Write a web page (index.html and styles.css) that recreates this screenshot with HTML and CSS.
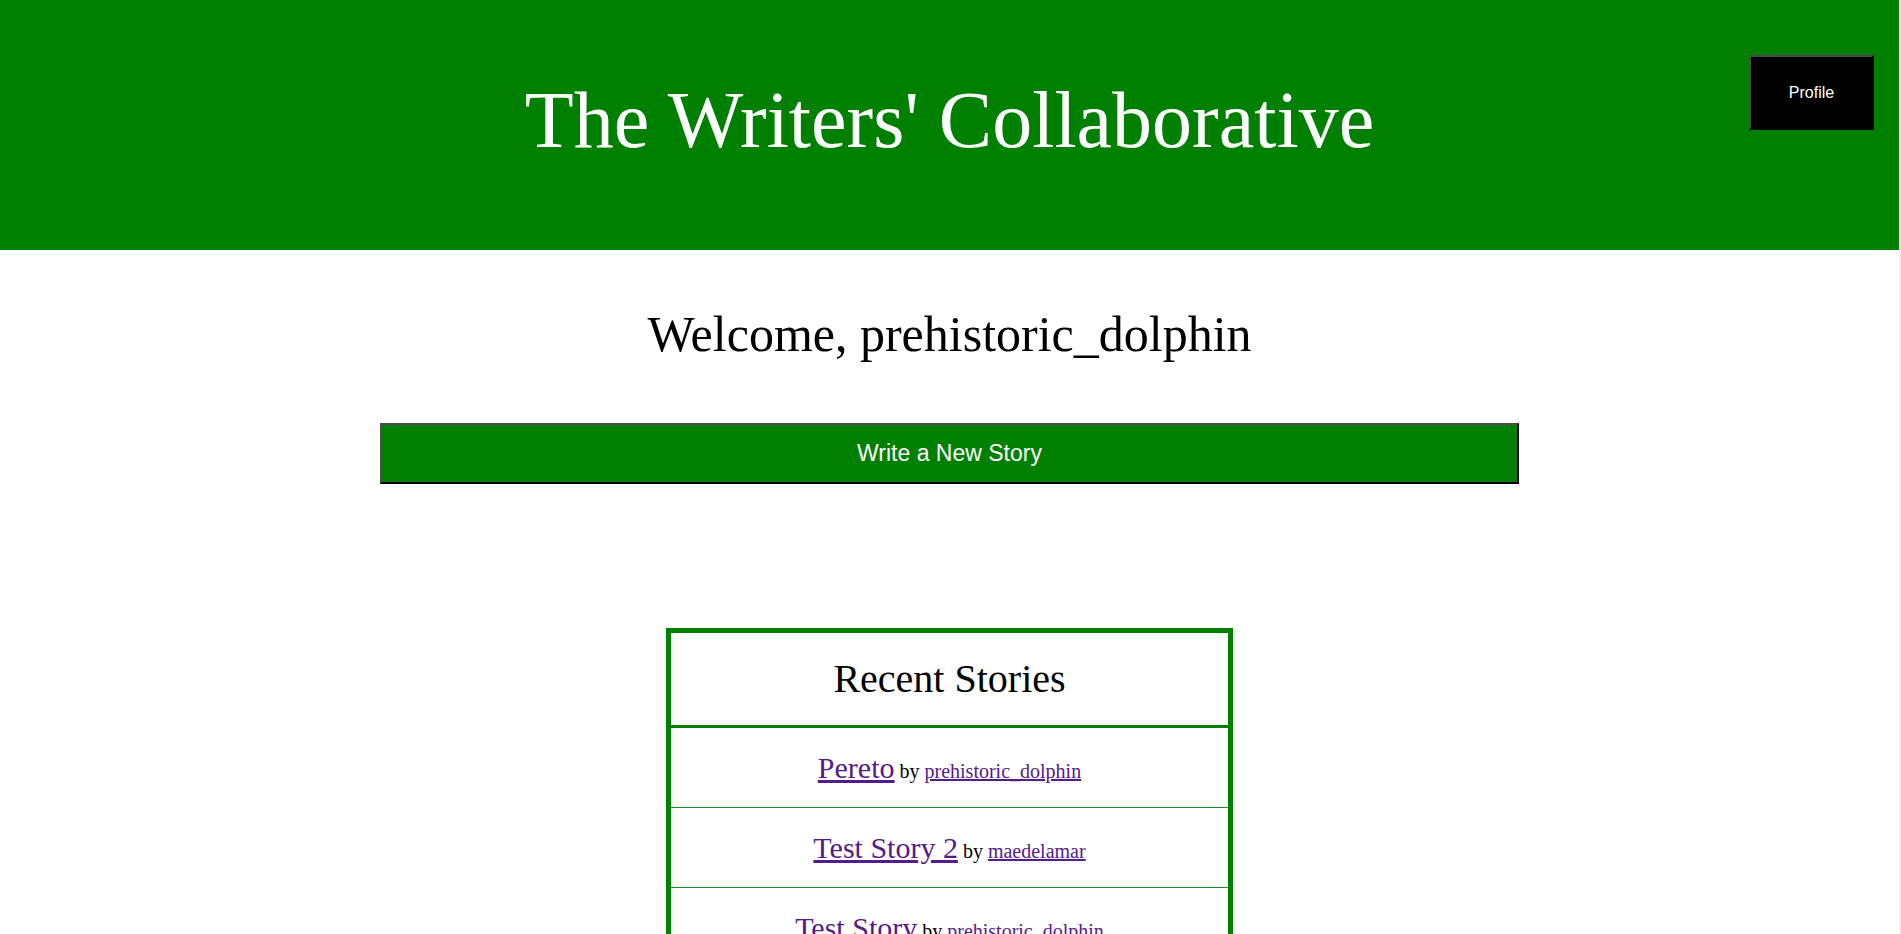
FILE: index.html
```html
<!DOCTYPE html>
<html lang="en">
<head>
<meta charset="utf-8">
<title>The Writers' Collaborative</title>
<link rel="stylesheet" href="styles.css">
</head>
<body>
<header class="site-header">
  <h1 class="site-title">The Writers' Collaborative</h1>
  <button class="profile-btn" type="button">Profile</button>
</header>
<main class="content">
  <h2 class="welcome">Welcome, prehistoric_dolphin</h2>
  <button class="write-btn" type="button">Write a New Story</button>
  <section class="stories">
    <h3 class="stories-head">Recent Stories</h3>
    <div class="story-row"><a class="story-title" href="#">Pereto</a> by <a class="story-author" href="#">prehistoric_dolphin</a></div>
    <div class="story-row"><a class="story-title" href="#">Test Story 2</a> by <a class="story-author" href="#">maedelamar</a></div>
    <div class="story-row"><a class="story-title" href="#">Test Story</a> by <a class="story-author" href="#">prehistoric_dolphin</a></div>
  </section>
</main>
</body>
</html>
```

FILE: styles.css
```css
html {
  border-right: 2px solid #f0f0f0;
  background: #fff;
}
body {
  margin: 0;
  font-family: "Liberation Serif", "Times New Roman", serif;
  color: #000;
}
.site-header {
  position: relative;
  background: #008000;
  height: 250px;
  box-sizing: border-box;
  padding-top: 75px;
}
.site-title {
  margin: 0;
  font-size: 80px;
  font-weight: normal;
  color: #fff;
  text-align: center;
}
.profile-btn {
  position: absolute;
  top: 55px;
  right: 25px;
  width: 125px;
  height: 75px;
  box-sizing: border-box;
  background: #000;
  color: #fff;
  font-family: "Liberation Sans", Arial, sans-serif;
  font-size: 16px;
  border-style: solid;
  border-width: 2px;
  border-color: #4a4a4a #000 #000 #4a4a4a;
  padding: 0;
}
.content {
  display: flex;
  flex-direction: column;
  align-items: center;
}
.welcome {
  margin: 55px 0 0;
  font-size: 50px;
  font-weight: normal;
  text-align: center;
}
.write-btn {
  margin-top: 60px;
  width: 1139px;
  height: 61px;
  box-sizing: border-box;
  background: #008000;
  color: #fff;
  font-family: "Liberation Sans", Arial, sans-serif;
  font-size: 23px;
  border-style: solid;
  border-width: 2px;
  border-color: #4d4d4d #000 #000 #4d4d4d;
  padding: 0;
}
.stories {
  margin-top: 144px;
  width: 567px;
  box-sizing: border-box;
  border: 5px solid #008000;
  text-align: center;
}
.stories-head {
  margin: 0;
  padding: 22px 0 23px;
  font-size: 40px;
  font-weight: normal;
  border-bottom: 3px solid #008000;
}
.story-row {
  padding: 23px 0 22px;
  font-size: 20px;
  border-bottom: 1px solid #228b22;
}
.story-title {
  font-size: 30px;
  color: #551a8b;
}
.story-author {
  color: #551a8b;
}
```
